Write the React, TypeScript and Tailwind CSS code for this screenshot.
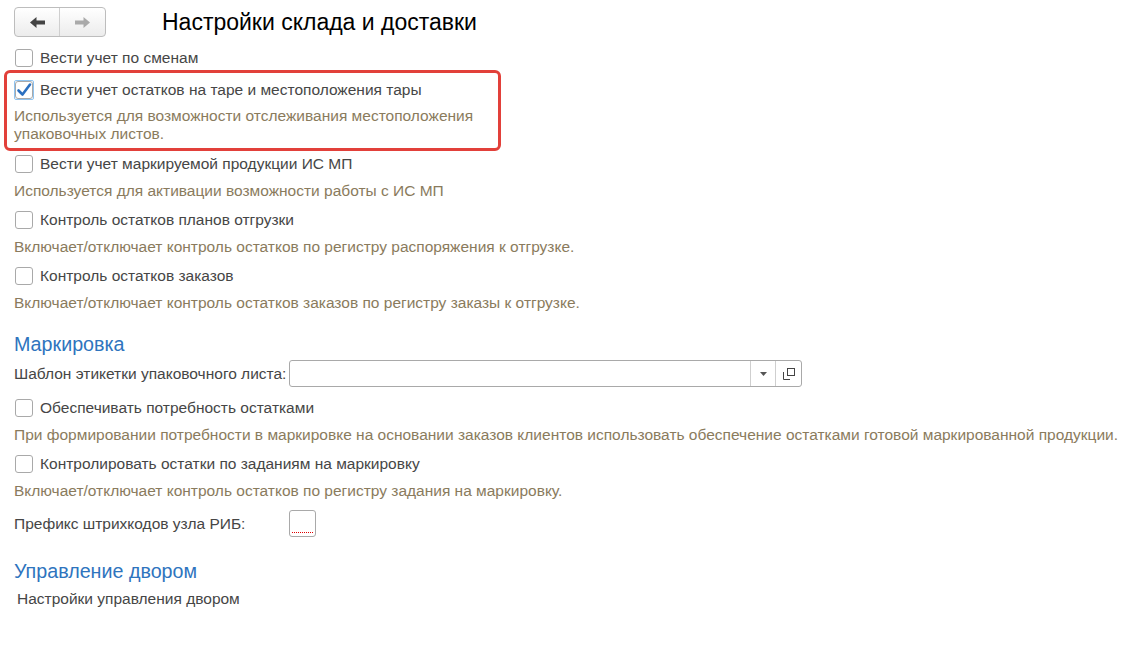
import { ReactNode } from "react";

const font = { fontFamily: '"Liberation Sans", Arial, sans-serif' };

function Box({ checked, focused }: { checked?: boolean; focused?: boolean }) {
  return (
    <span
      className={
        "flex h-[20px] w-[20px] shrink-0 items-center justify-center rounded-[2px] " +
        (focused ? "border border-[#8fc3f0]" : "")
      }
    >
      <span className="flex h-[18px] w-[18px] items-center justify-center rounded-[3px] border border-[#a9a9a9] bg-white">
        {checked && (
          <svg width="16" height="16" viewBox="0 0 16 16">
            <path d="M2.5 8.5 L6.5 12.5 L14 2.5" fill="none" stroke="#2a6fc0" strokeWidth="2.6" strokeLinecap="round" strokeLinejoin="round" />
          </svg>
        )}
      </span>
    </span>
  );
}

function Check({ label, checked, focused }: { label: string; checked?: boolean; focused?: boolean }) {
  return (
    <div className="flex h-[20px] items-center gap-[6px] pl-[14px]">
      <Box checked={checked} focused={focused} />
      <span className="text-[15.5px] text-[#464646]">{label}</span>
    </div>
  );
}

function Hint({ children }: { children: ReactNode }) {
  return <div className="pl-[14px] text-[15.5px] leading-[18px] text-[#8a7b5d]">{children}</div>;
}

function Heading({ children }: { children: ReactNode }) {
  return <div className="pl-[14px] text-[19.7px] leading-[24px] text-[#2e74be]">{children}</div>;
}

export default function App() {
  return (
    <div className="h-[645px] w-[1140px] overflow-hidden bg-white" style={font}>
      <div className="flex items-center pt-[7px]">
        <div className="ml-[14px] flex h-[30px] w-[92px] overflow-hidden rounded-[4px] border border-[#bdbdbd] bg-gradient-to-b from-white to-[#ececec]">
          <div className="flex w-1/2 items-center justify-center border-r border-[#cfcfcf]">
            <svg width="17" height="13" viewBox="0 0 17 13">
              <path d="M1 6.5 L7.5 1 V4.5 H16 V8.5 H7.5 V12 Z" fill="#444" />
            </svg>
          </div>
          <div className="flex w-1/2 items-center justify-center">
            <svg width="17" height="13" viewBox="0 0 17 13">
              <path d="M16 6.5 L9.5 1 V4.5 H1 V8.5 H9.5 V12 Z" fill="#aaa" />
            </svg>
          </div>
        </div>
        <h1 className="ml-[56px] text-[23px] leading-[28px] text-black">Настройки склада и доставки</h1>
      </div>

      <div className="mt-[11px]">
        <Check label="Вести учет по сменам" />
      </div>

      <div className="ml-[4px] mt-[2px] w-[497px] rounded-[6px] border-[3px] border-[#e2403a] pb-[5px] pt-[7px]">
        <div className="-ml-[7px]">
          <Check label="Вести учет остатков на таре и местоположения тары" checked focused />
          <div className="mt-[7px]">
            <Hint>
              Используется для возможности отслеживания местоположения
              <br />
              упаковочных листов.
            </Hint>
          </div>
        </div>
      </div>

      <div className="mt-[3px] flex flex-col">
        <Check label="Вести учет маркируемой продукции ИС МП" />
        <div className="mt-[8px]">
          <Hint>Используется для активации возможности работы с ИС МП</Hint>
        </div>
        <div className="mt-[10px]">
          <Check label="Контроль остатков планов отгрузки" />
        </div>
        <div className="mt-[8px]">
          <Hint>Включает/отключает контроль остатков по регистру распоряжения к отгрузке.</Hint>
        </div>
        <div className="mt-[10px]">
          <Check label="Контроль остатков заказов" />
        </div>
        <div className="mt-[8px]">
          <Hint>Включает/отключает контроль остатков заказов по регистру заказы к отгрузке.</Hint>
        </div>
      </div>

      <div className="mt-[20px]">
        <Heading>Маркировка</Heading>
      </div>

      <div className="mt-[4px] flex items-center pl-[14px]">
        <span className="w-[275px] text-[15.5px] text-[#464646]">Шаблон этикетки упаковочного листа:</span>
        <div className="flex h-[27px] w-[513px] rounded-[3px] border border-[#a9a9a9] bg-white">
          <div className="flex-1" />
          <div className="flex w-[25px] items-center justify-center border-l border-[#cfcfcf]">
            <svg width="7" height="4" viewBox="0 0 7 4">
              <path d="M0 0 H7 L3.5 4 Z" fill="#555" />
            </svg>
          </div>
          <div className="flex w-[26px] items-center justify-center border-l border-[#cfcfcf]">
            <svg width="12" height="12" viewBox="0 0 12 12">
              <rect x="4.5" y="0.5" width="7" height="7" fill="none" stroke="#444" />
              <path d="M0.5 4 V11.5 H7" fill="none" stroke="#444" />
            </svg>
          </div>
        </div>
      </div>

      <div className="mt-[11px]">
        <Check label="Обеспечивать потребность остатками" />
      </div>
      <div className="mt-[8px]">
        <Hint>
          При формировании потребности в маркировке на основании заказов клиентов использовать обеспечение остатками готовой маркированной продукции.
        </Hint>
      </div>
      <div className="mt-[10px]">
        <Check label="Контролировать остатки по заданиям на маркировку" />
      </div>
      <div className="mt-[8px]">
        <Hint>Включает/отключает контроль остатков по регистру задания на маркировку.</Hint>
      </div>

      <div className="mt-[10px] flex items-center pl-[14px]">
        <span className="w-[275px] text-[15.5px] text-[#464646]">Префикс штрихкодов узла РИБ:</span>
        <div className="relative h-[27px] w-[27px] rounded-[3px] border border-[#a9a9a9] bg-white">
          <div className="absolute bottom-[3px] left-[2px] right-[2px] border-b border-dotted border-[#e00000]" />
        </div>
      </div>

      <div className="mt-[22px]">
        <Heading>Управление двором</Heading>
      </div>
      <div className="mt-[4px] pl-[17px] text-[15.5px] text-[#464646]">Настройки управления двором</div>
    </div>
  );
}
